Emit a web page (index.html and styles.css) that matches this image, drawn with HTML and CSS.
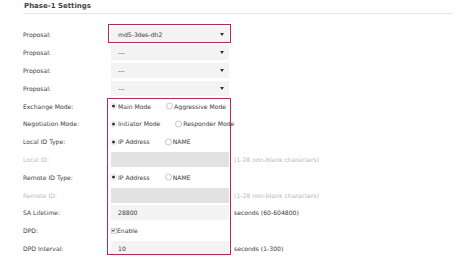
FILE: index.html
```html
<!DOCTYPE html>
<html lang="en">
<head>
    <meta charset="UTF-8">
    <meta name="viewport" content="width=device-width, initial-scale=1.0">
    <title>Phase-1 Settings</title>
    <link rel="stylesheet" href="styles.css">
</head>
<body>
    <div class="panel">
        <h2 class="title">Phase-1 Settings</h2>
        <div class="form">
            <div class="row">
                <span class="label">Proposal:</span>
                <div class="field"><div class="select"><span>md5-3des-dh2</span><i class="caret"></i></div></div>
            </div>
            <div class="row">
                <span class="label">Proposal:</span>
                <div class="field"><div class="select"><span>---</span><i class="caret"></i></div></div>
            </div>
            <div class="row">
                <span class="label">Proposal:</span>
                <div class="field"><div class="select"><span>---</span><i class="caret"></i></div></div>
            </div>
            <div class="row">
                <span class="label">Proposal:</span>
                <div class="field"><div class="select"><span>---</span><i class="caret"></i></div></div>
            </div>
            <div class="row">
                <span class="label">Exchange Mode:</span>
                <div class="field choices">
                    <span class="radio on">Main Mode</span>
                    <span class="radio">Aggressive Mode</span>
                </div>
            </div>
            <div class="row">
                <span class="label">Negotiation Mode:</span>
                <div class="field choices">
                    <span class="radio on">Initiator Mode</span>
                    <span class="radio">Responder Mode</span>
                </div>
            </div>
            <div class="row">
                <span class="label">Local ID Type:</span>
                <div class="field choices">
                    <span class="radio on">IP Address</span>
                    <span class="radio">NAME</span>
                </div>
            </div>
            <div class="row">
                <span class="label off">Local ID:</span>
                <div class="field"><div class="input disabled"></div></div>
                <span class="hint off">(1-28 non-blank characters)</span>
            </div>
            <div class="row">
                <span class="label">Remote ID Type:</span>
                <div class="field choices">
                    <span class="radio on">IP Address</span>
                    <span class="radio">NAME</span>
                </div>
            </div>
            <div class="row">
                <span class="label off">Remote ID:</span>
                <div class="field"><div class="input disabled"></div></div>
                <span class="hint off">(1-28 non-blank characters)</span>
            </div>
            <div class="row">
                <span class="label">SA Lifetime:</span>
                <div class="field"><div class="input">28800</div></div>
                <span class="hint">seconds (60-604800)</span>
            </div>
            <div class="row">
                <span class="label">DPD:</span>
                <div class="field choices">
                    <span class="check">Enable</span>
                </div>
            </div>
            <div class="row">
                <span class="label">DPD Interval:</span>
                <div class="field"><div class="input">10</div></div>
                <span class="hint">seconds (1-300)</span>
            </div>

            <div class="mark mark-proposal"></div>
            <div class="mark mark-group"></div>
        </div>
    </div>
</body>
</html>
```

FILE: styles.css
```css
body {
    margin: 0;
    background-color: #fff;
    font-family: "DejaVu Sans", Verdana, sans-serif;
    color: #3a3a3a;
    overflow: hidden;
}
.panel {
    padding: 0 22px 0 23px;
}
.title {
    margin: 0;
    padding-left: 1px;
    font-size: 7px;
    font-weight: bold;
    line-height: 13px;
    color: #444;
    border-bottom: 1px solid #e4e4e4;
}
.form {
    position: relative;
    margin-top: 12px;
}
.row {
    display: flex;
    align-items: center;
    height: 17.8px;
    font-size: 6.1px;
}
.label {
    width: 88px;
    flex-shrink: 0;
    color: #404040;
}
.label.off {
    color: #bdbdbd;
}
.field {
    width: 118px;
    flex-shrink: 0;
}
.select,
.input {
    height: 15px;
    box-sizing: border-box;
    background-color: #f3f3f3;
    display: flex;
    align-items: center;
    padding: 0 5px 0 7px;
    color: #3a3a3a;
}
.select {
    justify-content: space-between;
}
.caret {
    width: 0;
    height: 0;
    border-left: 2.5px solid transparent;
    border-right: 2.5px solid transparent;
    border-top: 3px solid #333;
}
.input.disabled {
    background-color: #e2e2e2;
}
.choices {
    display: flex;
    align-items: center;
    white-space: nowrap;
    margin-left: -1px;
}
.radio {
    position: relative;
    padding-left: 8px;
    margin-right: 15px;
}
.radio::before {
    content: "";
    position: absolute;
    left: 0;
    top: 50%;
    width: 5px;
    height: 5px;
    transform: translateY(-50%);
    border: 0.6px solid #c8c8c8;
    border-radius: 50%;
    background: #fff;
}
.radio.on::before {
    border-color: #e4e4e4;
}
.radio.on::after {
    content: "";
    position: absolute;
    left: 1.6px;
    top: 50%;
    width: 3px;
    height: 3px;
    transform: translateY(-50%);
    border-radius: 50%;
    background: #333;
}
.check {
    position: relative;
    padding-left: 7px;
}
.check::before {
    content: "";
    position: absolute;
    left: 0.5px;
    top: 50%;
    width: 4.5px;
    height: 4.5px;
    transform: translateY(-50%);
    border: 0.5px solid #cfcfcf;
    background: #fff;
}
.check::after {
    content: "";
    position: absolute;
    left: 1.8px;
    top: 50%;
    width: 2.2px;
    height: 1.1px;
    margin-top: -1.5px;
    border-left: 0.6px solid #555;
    border-bottom: 0.6px solid #555;
    transform: rotate(-45deg);
}
.hint {
    padding-left: 5px;
    white-space: nowrap;
    color: #3a3a3a;
}
.hint.off {
    color: #b8b8b8;
}
.mark {
    position: absolute;
    box-sizing: border-box;
    border: 1.6px solid #b3285d;
    pointer-events: none;
}
.mark-proposal {
    left: 85px;
    top: -2px;
    width: 123px;
    height: 19px;
}
.mark-group {
    left: 84px;
    top: 72px;
    width: 124px;
    height: 157px;
}
```
